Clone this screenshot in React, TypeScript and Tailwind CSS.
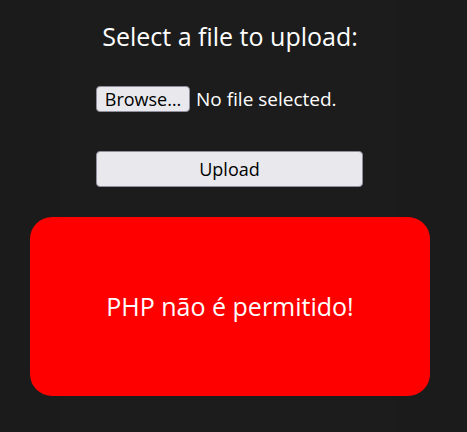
import React from "react";

export default function App() {
  return (
    <div className="min-h-[432px] w-full bg-[#1b1b1b] text-white" style={{ fontFamily: '"Open Sans", "Noto Sans", sans-serif' }}>
      <div className="ml-[62px] w-[336px] min-h-[432px] bg-[#1c1c1c] flex flex-col">
        <h2 className="mt-[21px] h-[30px] text-center text-[25px] leading-[30px]">Select a file to upload:</h2>
        <div className="mt-[35px] ml-[34px] h-[26px] flex items-center gap-[6px] text-[19px] leading-[26px]">
          <button className="h-[26px] w-[94px] bg-[#e9e9ed] text-black border border-[#8f8f9d] rounded-[4px] text-[18px] leading-none">
            Browse…
          </button>
          <span>No file selected.</span>
        </div>
        <button className="mt-[39px] ml-[34px] w-[267px] h-[36px] bg-[#e9e9ed] text-black border border-[#8f8f9d] rounded-[4px] text-[18px] leading-none">
          Upload
        </button>
        <div className="mt-[30px] -ml-[32px] w-[400px] h-[179px] bg-[#ff0000] rounded-[22px] flex items-center justify-center">
          <p className="text-[25px]">PHP não é permitido!</p>
        </div>
      </div>
    </div>
  );
}
